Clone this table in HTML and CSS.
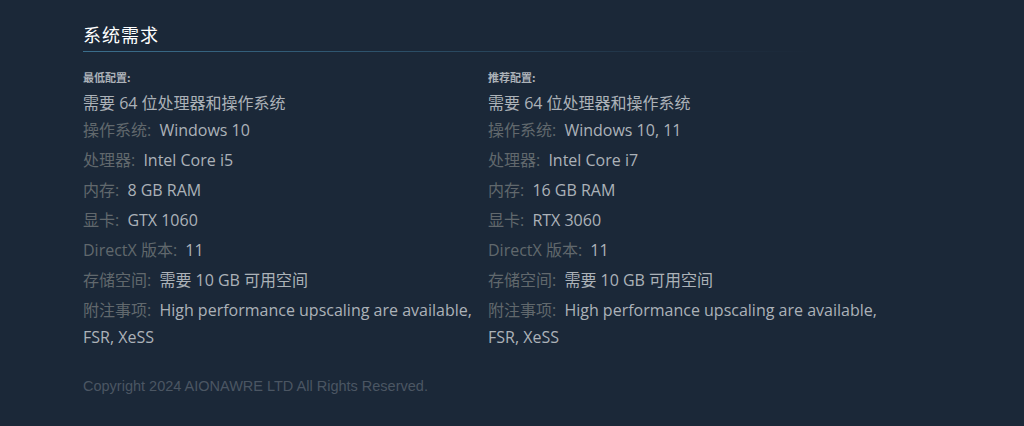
FILE: index.html
```html
<!DOCTYPE html>
<html lang="zh-CN">
<head>
<meta charset="utf-8">
<link rel="stylesheet" href="styles.css">
</head>
<body>
<div class="page">
  <h2 class="title">系统需求</h2>
  <div class="cols">
    <div class="col">
      <div class="col-head">最低配置:</div>
      <ul class="reqs">
        <li class="first">需要 64 位处理器和操作系统</li>
        <li><span class="k">操作系统:</span> Windows 10</li>
        <li><span class="k">处理器:</span> Intel Core i5</li>
        <li><span class="k">内存:</span> 8 GB RAM</li>
        <li><span class="k">显卡:</span> GTX 1060</li>
        <li><span class="k">DirectX 版本:</span> 11</li>
        <li><span class="k">存储空间:</span> 需要 10 GB 可用空间</li>
        <li><span class="k">附注事项:</span> High performance upscaling are available, FSR, XeSS</li>
      </ul>
    </div>
    <div class="col">
      <div class="col-head">推荐配置:</div>
      <ul class="reqs">
        <li class="first">需要 64 位处理器和操作系统</li>
        <li><span class="k">操作系统:</span> Windows 10, 11</li>
        <li><span class="k">处理器:</span> Intel Core i7</li>
        <li><span class="k">内存:</span> 16 GB RAM</li>
        <li><span class="k">显卡:</span> RTX 3060</li>
        <li><span class="k">DirectX 版本:</span> 11</li>
        <li><span class="k">存储空间:</span> 需要 10 GB 可用空间</li>
        <li><span class="k">附注事项:</span> High performance upscaling are available, FSR, XeSS</li>
      </ul>
    </div>
  </div>
  <p class="copy">Copyright 2024 AIONAWRE LTD All Rights Reserved.</p>
</div>
</body>
</html>
```

FILE: styles.css
```css
html, body {
  margin: 0;
  padding: 0;
  background: #1b2838;
  height: 100%;
}
body {
  font-family: "Open Sans", "Noto Sans CJK SC", sans-serif;
  color: #acb2b8;
}
.page {
  padding: 22px 0 0 83px;
  width: 810px;
}
.title {
  margin: 0;
  width: 730px;
  font-size: 18px;
  font-weight: normal;
  letter-spacing: 1px;
  color: #ffffff;
  line-height: 24px;
  padding-bottom: 5px;
  font-family: "Noto Sans CJK SC", sans-serif;
}
.title::after {
  content: "";
  display: block;
  height: 1px;
  margin-top: 5px;
  background: linear-gradient(to right, #3b6e8c 0%, #2f5670 35%, rgba(45,75,100,0.25) 80%, rgba(45,75,100,0) 100%);
}
.cols {
  display: flex;
  margin-top: 12px;
}
.col {
  width: 405px;
}
.col-head {
  font-size: 11px;
  font-weight: bold;
  color: #acb2b8;
  line-height: 16px;
  font-family: "Noto Sans CJK SC", sans-serif;
}
.reqs {
  list-style: none;
  margin: 0;
  padding: 0;
  font-size: 16px;
  line-height: 27px;
}
.reqs li {
  margin-top: 3px;
}
.reqs li.first {
  margin-top: 5px;
}
.reqs li.first + li {
  margin-top: 0;
}
.k {
  color: #61686d;
  margin-right: 4px;
}
.copy {
  margin: 27px 0 0;
  font-family: "Liberation Sans", Arial, sans-serif;
  font-size: 14.5px;
  color: #4b5663;
}
```
